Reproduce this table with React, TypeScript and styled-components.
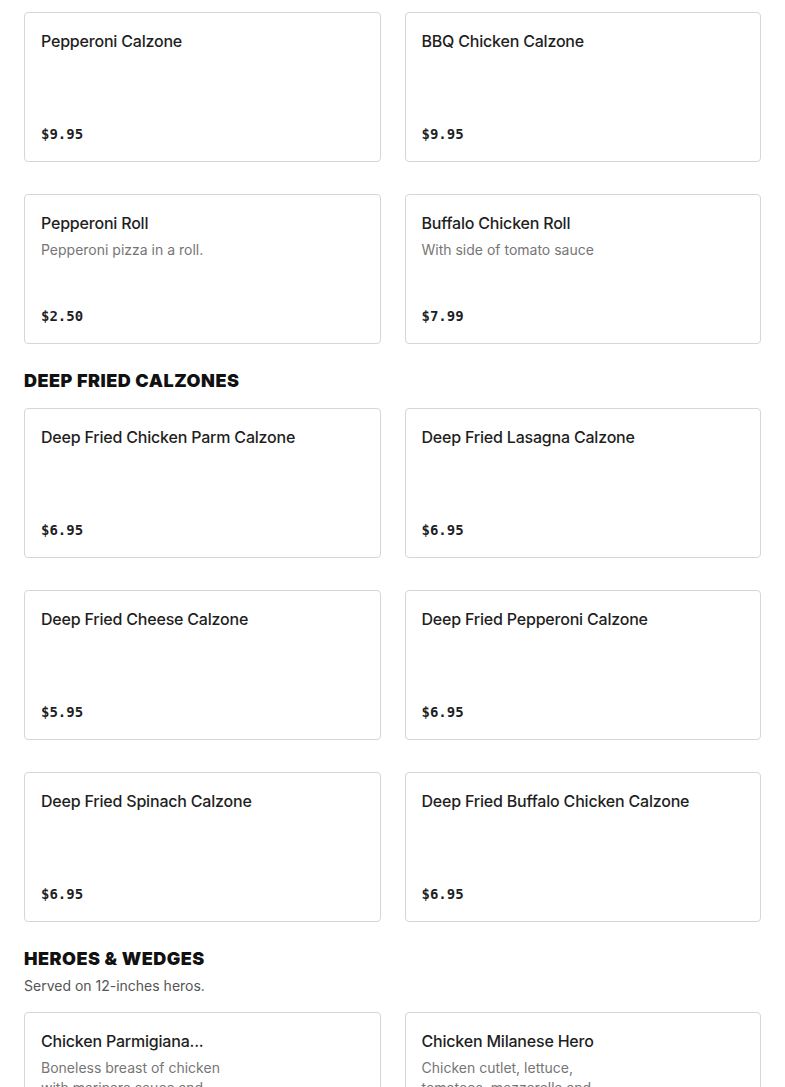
import React from "react";
import styled, { createGlobalStyle } from "styled-components";

const Global = createGlobalStyle`
  html, body { margin: 0; padding: 0; background: #fff; }
  body { font-family: "Inter", "Noto Sans", sans-serif; color: #1f1f1f; -webkit-font-smoothing: antialiased; }
  * { box-sizing: border-box; }
`;

const Page = styled.div`
  padding: 12px 24px 0;
  display: flex;
  flex-direction: column;
`;

const Section = styled.section`
  display: flex;
  flex-direction: column;
  margin-bottom: 24px;
`;

const SectionTitle = styled.h2`
  margin: 0;
  padding-top: 1px;
  font-family: "Inter", sans-serif;
  font-weight: 900;
  font-size: 18px;
  line-height: 24px;
  letter-spacing: 0.5px;
  color: #111;
`;

const SectionNote = styled.p`
  margin: 5px 0 0;
  font-size: 14px;
  line-height: 20px;
  color: #555;
`;

const Grid = styled.div<{ $top: number }>`
  display: grid;
  grid-template-columns: 1fr 1fr;
  column-gap: 24px;
  row-gap: 32px;
  margin-top: ${(p) => p.$top}px;
`;

const Card = styled.div`
  height: 150px;
  border: 1px solid #d6d6d6;
  border-radius: 4px;
  padding: 16px 16px 15px;
  display: flex;
  flex-direction: column;
  background: #fff;
`;

const Info = styled.div<{ $narrow?: boolean }>`
  display: flex;
  flex-direction: column;
  flex: 1;
  max-width: ${(p) => (p.$narrow ? "180px" : "none")};
`;

const Name = styled.div<{ $narrow?: boolean }>`
  font-size: 16px;
  font-weight: 500;
  line-height: 24px;
  letter-spacing: -0.2px;
  color: #1f1f1f;
  white-space: ${(p) => (p.$narrow ? "nowrap" : "normal")};
  overflow: hidden;
  text-overflow: ellipsis;
`;

const Desc = styled.div`
  margin-top: 5px;
  font-size: 14px;
  line-height: 20px;
  color: #767676;
`;

const Price = styled.div`
  margin-top: auto;
  font-family: "DejaVu Sans Mono", "Liberation Mono", monospace;
  font-weight: 700;
  font-size: 14px;
  line-height: 24px;
  color: #1f1f1f;
`;

type Item = { name: string; desc?: string; price?: string };

const top: Item[] = [
  { name: "Pepperoni Calzone", price: "$9.95" },
  { name: "BBQ Chicken Calzone", price: "$9.95" },
  { name: "Pepperoni Roll", desc: "Pepperoni pizza in a roll.", price: "$2.50" },
  { name: "Buffalo Chicken Roll", desc: "With side of tomato sauce", price: "$7.99" },
];

const deepFried: Item[] = [
  { name: "Deep Fried Chicken Parm Calzone", price: "$6.95" },
  { name: "Deep Fried Lasagna Calzone", price: "$6.95" },
  { name: "Deep Fried Cheese Calzone", price: "$5.95" },
  { name: "Deep Fried Pepperoni Calzone", price: "$6.95" },
  { name: "Deep Fried Spinach Calzone", price: "$6.95" },
  { name: "Deep Fried Buffalo Chicken Calzone", price: "$6.95" },
];

const heroes: Item[] = [
  { name: "Chicken Parmigiana...", desc: "Boneless breast of chicken with marinara sauce and mozzarella.", price: "$11.95" },
  { name: "Chicken Milanese Hero", desc: "Chicken cutlet, lettuce, tomatoes, mozzarella and balsamic.", price: "$12.95" },
];

const MenuCard = ({ item, narrow }: { item: Item; narrow?: boolean }) => (
  <Card>
    <Info $narrow={narrow}>
      <Name $narrow={narrow}>{item.name}</Name>
      {item.desc && <Desc>{item.desc}</Desc>}
      {item.price && <Price>{item.price}</Price>}
    </Info>
  </Card>
);

export default function App() {
  return (
    <>
      <Global />
      <Page>
        <Section>
          <Grid $top={0}>
            {top.map((i) => (
              <MenuCard key={i.name} item={i} />
            ))}
          </Grid>
        </Section>
        <Section>
          <SectionTitle>DEEP FRIED CALZONES</SectionTitle>
          <Grid $top={15}>
            {deepFried.map((i) => (
              <MenuCard key={i.name} item={i} />
            ))}
          </Grid>
        </Section>
        <Section>
          <SectionTitle>HEROES &amp; WEDGES</SectionTitle>
          <SectionNote>Served on 12-inches heros.</SectionNote>
          <Grid $top={16}>
            {heroes.map((i) => (
              <MenuCard key={i.name} item={i} narrow />
            ))}
          </Grid>
        </Section>
      </Page>
    </>
  );
}
